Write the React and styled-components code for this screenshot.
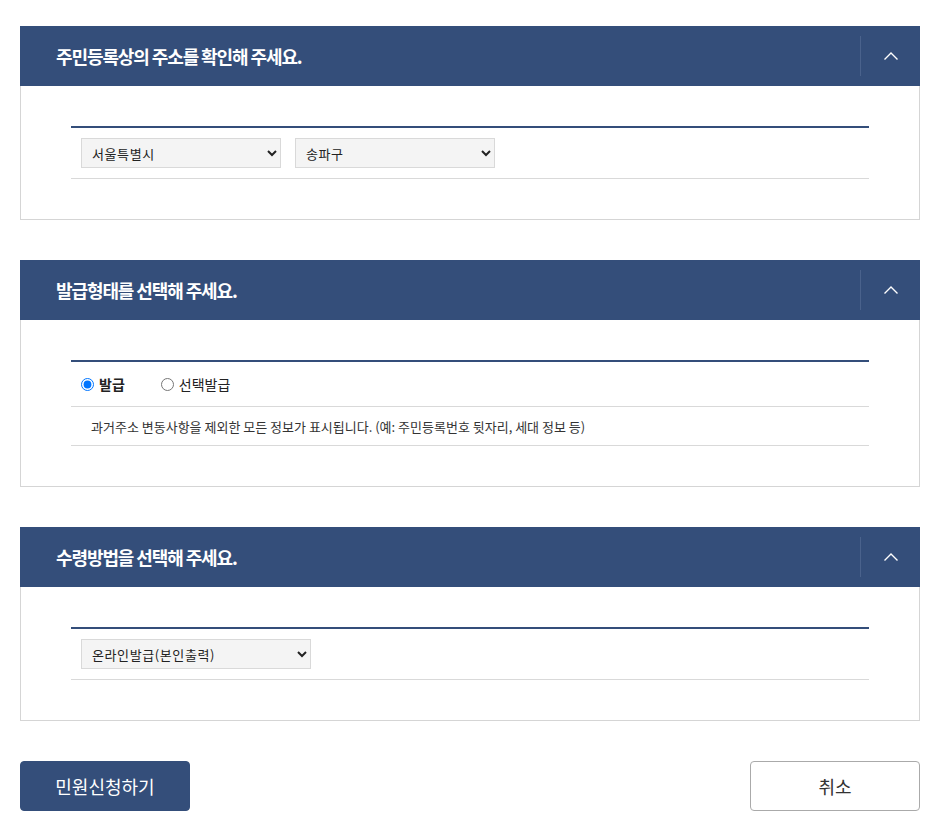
import React, { useState } from "react";
import styled, { createGlobalStyle } from "styled-components";

const GlobalStyle = createGlobalStyle`
  body {
    margin: 0;
    background: #fff;
    font-family: "Noto Sans CJK KR", "Noto Sans", sans-serif;
    color: #222;
  }
`;

const Page = styled.div`
  width: 900px;
  padding: 26px 25px 20px 20px;
`;

const Panel = styled.section`
  margin-bottom: 40px;
`;

const Header = styled.div`
  height: 60px;
  background: #344e7a;
  display: flex;
  align-items: center;
`;

const Title = styled.h2`
  flex: 1;
  margin: 0;
  padding-left: 36px;
  color: #fff;
  font-size: 18px;
  font-weight: 700;
  letter-spacing: -1.1px;
`;

const Toggle = styled.button`
  width: 60px;
  height: 40px;
  border: 0;
  border-left: 1px solid #4a628c;
  background: transparent;
  display: flex;
  align-items: center;
  justify-content: center;
  cursor: pointer;
  padding: 0;
`;

const Body = styled.div`
  border: 1px solid #d5d5d5;
  border-top: 0;
  padding: 40px 50px 40px 50px;
`;

const Table = styled.div`
  border-top: 2px solid #344e7a;
`;

const Row = styled.div`
  display: flex;
  align-items: center;
  gap: ${(p) => p.$gap ?? 14}px;
  padding: ${(p) => p.$pad || "10px"} 10px;
  border-bottom: 1px solid #d9d9d9;
  min-height: ${(p) => p.$h || 0}px;
  box-sizing: border-box;
`;

const Select = styled.select`
  width: ${(p) => p.$w}px;
  height: 30px;
  background-color: #f4f4f4;
  border: 1px solid #d9d9d9;
  border-radius: 0;
  font-family: "Noto Sans CJK KR", sans-serif;
  font-size: 13px;
  letter-spacing: 0.6px;
  color: #222;
  padding: 0 6px;
`;

const RadioLabel = styled.label`
  display: flex;
  align-items: center;
  gap: 4px;
  font-size: 14px;
  font-weight: ${(p) => (p.$on ? 700 : 400)};
  color: #222;
  margin-right: 36px;
  input {
    margin: 0 1px 0 0;
    width: 13px;
    height: 13px;
  }
`;

const Note = styled.p`
  margin: 0;
  padding-left: 10px;
  font-size: 13px;
  color: #333;
`;

const Actions = styled.div`
  display: flex;
  justify-content: space-between;
`;

const Button = styled.button`
  width: 170px;
  height: 50px;
  border-radius: 4px;
  font-family: "Noto Sans CJK KR", sans-serif;
  font-size: 18px;
  cursor: pointer;
  background: ${(p) => (p.$primary ? "#344e7a" : "#fff")};
  color: ${(p) => (p.$primary ? "#fff" : "#333")};
  border: 1px solid ${(p) => (p.$primary ? "#344e7a" : "#aaa")};
`;

const Chevron = () => (
  <svg width="16" height="10" viewBox="0 0 16 10" fill="none">
    <path d="M1.5 8.5 L8 2 L14.5 8.5" stroke="#fff" strokeWidth="1.4" />
  </svg>
);

const Section = ({ title, children }) => (
  <Panel>
    <Header>
      <Title>{title}</Title>
      <Toggle aria-label="접기">
        <Chevron />
      </Toggle>
    </Header>
    <Body>
      <Table>{children}</Table>
    </Body>
  </Panel>
);

const App = () => {
  const [kind, setKind] = useState("all");
  return (
    <>
      <GlobalStyle />
      <Page>
        <Section title="주민등록상의 주소를 확인해 주세요.">
          <Row>
            <Select $w={200} defaultValue="서울특별시">
              <option>서울특별시</option>
              <option>부산광역시</option>
            </Select>
            <Select $w={200} defaultValue="송파구">
              <option>송파구</option>
              <option>강남구</option>
            </Select>
          </Row>
        </Section>
        <Section title="발급형태를 선택해 주세요.">
          <Row $h={45} $pad="0" $gap={0}>
            <RadioLabel $on={kind === "all"}>
              <input
                type="radio"
                name="kind"
                checked={kind === "all"}
                onChange={() => setKind("all")}
              />
              발급
            </RadioLabel>
            <RadioLabel $on={kind === "select"}>
              <input
                type="radio"
                name="kind"
                checked={kind === "select"}
                onChange={() => setKind("select")}
              />
              선택발급
            </RadioLabel>
          </Row>
          <Row $h={39} $pad="0">
            <Note>
              과거주소 변동사항을 제외한 모든 정보가 표시됩니다. (예: 주민등록번호 뒷자리, 세대 정보 등)
            </Note>
          </Row>
        </Section>
        <Section title="수령방법을 선택해 주세요.">
          <Row>
            <Select $w={230} defaultValue="온라인발급(본인출력)">
              <option>온라인발급(본인출력)</option>
              <option>우편수령</option>
            </Select>
          </Row>
        </Section>
        <Actions>
          <Button $primary>민원신청하기</Button>
          <Button>취소</Button>
        </Actions>
      </Page>
    </>
  );
};

export default App;
